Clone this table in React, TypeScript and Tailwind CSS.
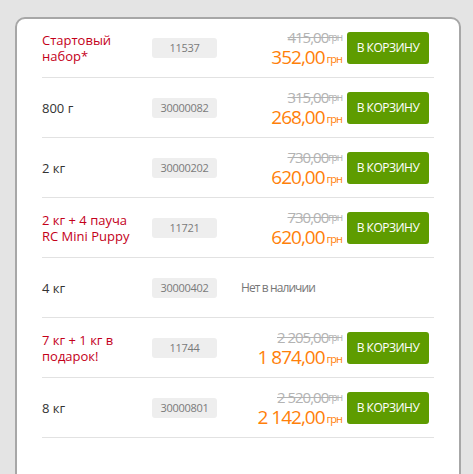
type Item = {
  name: string;
  sku: string;
  special?: boolean;
  oldPrice?: string;
  price?: string;
};

const items: Item[] = [
  { name: "Стартовый набор*", sku: "11537", special: true, oldPrice: "415,00", price: "352,00" },
  { name: "800 г", sku: "30000082", oldPrice: "315,00", price: "268,00" },
  { name: "2 кг", sku: "30000202", oldPrice: "730,00", price: "620,00" },
  { name: "2 кг + 4 пауча RC Mini Puppy", sku: "11721", special: true, oldPrice: "730,00", price: "620,00" },
  { name: "4 кг", sku: "30000402" },
  { name: "7 кг + 1 кг в подарок!", sku: "11744", special: true, oldPrice: "2 205,00", price: "1 874,00" },
  { name: "8 кг", sku: "30000801", oldPrice: "2 520,00", price: "2 142,00" },
];

function Row({ item, first }: { item: Item; first: boolean }) {
  return (
    <div
      className={`flex items-center border-b border-[#e2e2e2] ${first ? "h-[59px]" : "h-[60px]"}`}
    >
      <div
        className={`w-[100px] mr-[10px] text-[13px] leading-[16px] ${item.special ? "text-[#c4001a]" : "text-[#333333]"}`}
      >
        {item.name}
      </div>

      <div className="w-[65px] h-[20px] rounded-[3px] bg-[#eeeeee] text-[#7a7a7a] text-[11px] leading-[20px] text-center tracking-[-0.3px]">
        {item.sku}
      </div>

      {item.price ? (
        <div className="flex-1 flex items-center justify-end gap-[5px] pr-[5px]">
          <div className="flex flex-col items-end">
            <div className="h-[16px] flex items-end text-[#b3b3b3] line-through tracking-[-1px]">
              <span className="text-[15px] leading-[15px]">{item.oldPrice}</span>
              <span className="text-[10px] leading-[15px]">грн</span>
            </div>
            <div className="h-[22px] flex items-end text-[#ff7f0a] tracking-[-1px]">
              <span className="text-[19px] leading-[20px]">{item.price}</span>
              <span className="text-[11px] leading-[16px] ml-[2px]">грн</span>
            </div>
          </div>
          <button className="w-[82px] h-[32px] rounded-[3px] bg-[#5e9c00] text-white text-[12px] tracking-[-0.5px]">
            В КОРЗИНУ
          </button>
        </div>
      ) : (
        <div className="flex-1 pl-[24px] text-[12px] text-[#777777] tracking-[-0.9px]">
          Нет в наличии
        </div>
      )}
    </div>
  );
}

export default function App() {
  return (
    <div
      className="w-[473px] h-[474px] overflow-hidden bg-[#e4e4e4] pt-[17px] pl-[15px] pr-[12px]"
      style={{ fontFamily: '"Open Sans", "Liberation Sans", sans-serif' }}
    >
      <div className="bg-white border-2 border-[#a7a7a7] rounded-[10px] px-[25px] pb-[60px]">
        {items.map((item, i) => (
          <Row key={item.sku} item={item} first={i === 0} />
        ))}
      </div>
    </div>
  );
}
